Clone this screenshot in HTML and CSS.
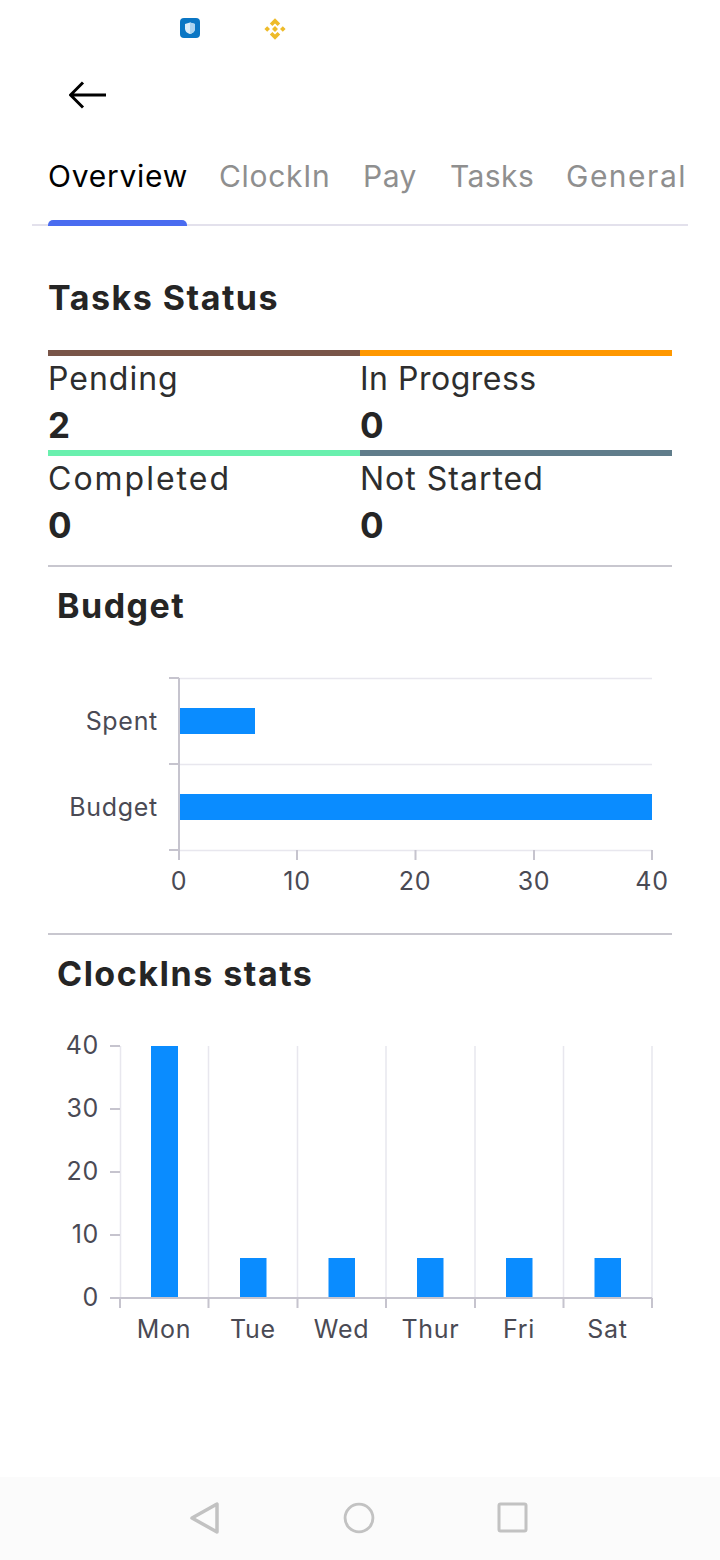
FILE: index.html
```html
<!DOCTYPE html>
<html>
<head>
<meta charset="utf-8">
<title>Overview</title>
<link rel="stylesheet" href="styles.css">
</head>
<body>
<div class="page">
	<div class="statusbar">
		<svg class="status-icon shield" viewBox="0 0 20 20">
			<rect width="20" height="20" rx="4" fill="#0a76c4"/>
			<path d="M10 4.500L15 6V10.500C15 13.500 12.500 15.500 10 16C7.500 15.500 5 13.500 5 10.500V6Z" fill="#dcedf9"/>
			<path d="M10 4.500L15 6V10.500C15 13.500 12.500 15.500 10 16Z" fill="#a9d3f0"/>
		</svg>
		<svg class="status-icon binance" viewBox="0 0 22 22">
			<path d="M11 0.200L16.200 5.400L13.600 8L11 5.400L8.400 8L5.800 5.400ZM11 21.800L5.800 16.600L8.400 14L11 16.600L13.600 14L16.200 16.600ZM3.200 8.200L6 11L3.200 13.800L0.400 11ZM18.800 8.200L21.600 11L18.800 13.800L16 11ZM11 8L14 11L11 14L8 11Z" fill="#eebb2a"/>
		</svg>
	</div>

	<div class="topbar">
		<svg class="back" viewBox="0 0 38 28">
			<path d="M37 14H2M14 1.500L1.500 14L14 26.500" fill="none" stroke="#000" stroke-width="3"/>
		</svg>
	</div>

	<ul class="tabs">
		<li class="tab active">Overview</li>
		<li class="tab tab-clockin">ClockIn</li>
		<li class="tab tab-pay">Pay</li>
		<li class="tab tab-tasks">Tasks</li>
		<li class="tab tab-general">General</li>
	</ul>

	<h2 class="title title-tasks">Tasks Status</h2>
	<div class="status-grid">
		<div class="status brown"><div class="status-label">Pending</div><div class="status-num">2</div></div>
		<div class="status orange"><div class="status-label label-tight">In Progress</div><div class="status-num">0</div></div>
		<div class="status green"><div class="status-label label-wide">Completed</div><div class="status-num">0</div></div>
		<div class="status slate"><div class="status-label">Not Started</div><div class="status-num">0</div></div>
	</div>

	<div class="divider"></div>
	<h2 class="title title-chart">Budget</h2>
	<svg class="chart chart-budget" viewBox="0 648 720 252">
		<path class="grid" d="M179 678.500H652M179 764.500H652M179 850.500H652"/>
		<path class="axis" d="M179 678V860M169 678H179M169 764H179M169 850H179M297 850V860M415.500 850V860M534 850V860M652 850V860"/>
		<rect class="bar" x="180" y="708" width="75" height="26"/>
		<rect class="bar" x="180" y="794" width="472" height="26"/>
		<text class="label end" x="158" y="730">Spent</text>
		<text class="label end" x="158" y="816">Budget</text>
		<text class="label mid" x="179" y="890">0</text>
		<text class="label mid" x="297" y="890">10</text>
		<text class="label mid" x="415" y="890">20</text>
		<text class="label mid" x="534" y="890">30</text>
		<text class="label mid" x="652" y="890">40</text>
	</svg>

	<div class="divider divider-clockins"></div>
	<h2 class="title title-chart">ClockIns stats</h2>
	<svg class="chart chart-clockins" viewBox="0 1016 720 334">
		<path class="grid" d="M120.500 1046V1298M208.500 1046V1298M297.500 1046V1298M386 1046V1298M475 1046V1298M563.500 1046V1298M652 1046V1298"/>
		<path class="axis" d="M110 1298H652M110 1046H120M110 1109H120M110 1172H120M110 1235H120M120 1298V1308M208.500 1298V1308M297.500 1298V1308M386 1298V1308M475 1298V1308M563.500 1298V1308M652 1298V1308"/>
		<rect class="bar" x="151" y="1046" width="27" height="251"/>
		<rect class="bar" x="240" y="1258" width="26.500" height="39"/>
		<rect class="bar" x="328.500" y="1258" width="26.500" height="39"/>
		<rect class="bar" x="417" y="1258" width="26.500" height="39"/>
		<rect class="bar" x="506" y="1258" width="26.500" height="39"/>
		<rect class="bar" x="594.500" y="1258" width="26.500" height="39"/>
		<text class="label end" x="99" y="1054">40</text>
		<text class="label end" x="99" y="1117">30</text>
		<text class="label end" x="99" y="1180">20</text>
		<text class="label end" x="99" y="1243">10</text>
		<text class="label end" x="99" y="1306">0</text>
		<text class="label mid" x="164" y="1338">Mon</text>
		<text class="label mid" x="253" y="1338">Tue</text>
		<text class="label mid" x="341.500" y="1338">Wed</text>
		<text class="label mid" x="430.500" y="1338">Thur</text>
		<text class="label mid" x="519" y="1338">Fri</text>
		<text class="label mid" x="607.500" y="1338">Sat</text>
	</svg>

	<div class="navbar">
		<svg class="nav-icon" viewBox="0 0 32 34">
			<path d="M28 3V31L3 17Z" fill="none" stroke="#c2c2c2" stroke-width="3.500" stroke-linejoin="round"/>
		</svg>
		<svg class="nav-icon" viewBox="0 0 34 34">
			<circle cx="17" cy="17" r="14.800" fill="none" stroke="#c2c2c2" stroke-width="3"/>
		</svg>
		<svg class="nav-icon" viewBox="0 0 32 34">
			<rect x="2" y="3" width="27" height="27" rx="1.500" fill="none" stroke="#c2c2c2" stroke-width="3"/>
		</svg>
	</div>
</div>
</body>
</html>
```

FILE: styles.css
```css
html, body{margin:0; padding:0; background:#fff;}
body{font-family:"Inter","Noto Sans",sans-serif; color:#252525;}
.page{width:720px; height:1560px; position:relative; overflow:hidden;}

.statusbar{height:56px; display:flex; align-items:flex-start; padding:18px 0 0 180px; box-sizing:border-box;}
.status-icon{display:block;}
.shield{width:20px; height:20px;}
.binance{width:22px; height:22px; margin-left:64px;}

.topbar{height:84px; padding:25px 0 0 69px; box-sizing:border-box;}
.back{display:block; width:38px; height:28px;}

.tabs{list-style:none; margin:0 32px; padding:0 0 0 16px; height:86px; display:flex; border-bottom:2px solid #e3e1ec; box-sizing:border-box; position:relative;}
.tab{font-size:30px; line-height:72px; color:#8f8f8f; white-space:nowrap;}
.tab.active{width:139px; color:#000; position:relative; letter-spacing:0.75px;}
.tab.active:after{content:""; position:absolute; left:0; right:0; bottom:-2px; height:6px; background:#4a6cf0; border-radius:5px 5px 0 0;}
.tab-clockin{margin-left:32px; width:112px; letter-spacing:0.7px;}
.tab-pay{margin-left:32px; width:55px; letter-spacing:0.5px;}
.tab-tasks{margin-left:32px; width:84px; letter-spacing:0.4px;}
.tab-general{margin-left:32px; letter-spacing:1.5px;}

.title{margin:0; font-size:34px; font-weight:700; color:#252525; letter-spacing:1.5px;}
.title-tasks{margin:48px 48px 0; height:76px; line-height:47px;}
.title-chart{height:81px; line-height:77px; padding-left:57px; box-sizing:border-box;}

.status-grid{margin:0 48px; display:grid; grid-template-columns:312px 312px; grid-auto-rows:100px;}
.status{border-top:6px solid #000; box-sizing:border-box;}
.status.brown{border-color:#795548;}
.status.orange{border-color:#ff9800;}
.status.green{border-color:#69f0ae;}
.status.slate{border-color:#607d8b;}
.status-label{font-size:32px; line-height:46px; color:#2e2e2e; letter-spacing:1px;}
.label-tight{letter-spacing:0.5px;}
.label-wide{letter-spacing:2px;}
.status-num{font-size:35px; line-height:46px; font-weight:700; color:#252525;}

.divider{margin:15px 48px 0; height:2px; background:#c8c7cf;}
.divider-clockins{margin-top:0;}

.chart{display:block; width:720px;}
.chart-budget{height:252px; margin-bottom:33px;}
.chart-clockins{height:334px;}
.grid{fill:none; stroke:#e8e7ee; stroke-width:1.500;}
.axis{fill:none; stroke:#c6c4ce; stroke-width:2;}
.bar{fill:#0a8cff;}
.label{font-size:25px; fill:#4a4a54; letter-spacing:0.7px;}
.end{text-anchor:end;}
.mid{text-anchor:middle;}

.navbar{position:absolute; left:0; right:0; bottom:0; height:83px; background:#fbfbfb; display:flex; justify-content:center; align-items:center; gap:122px; padding:0 3px 1px 0; box-sizing:border-box;}
.nav-icon{display:block; width:32px; height:34px;}
```
